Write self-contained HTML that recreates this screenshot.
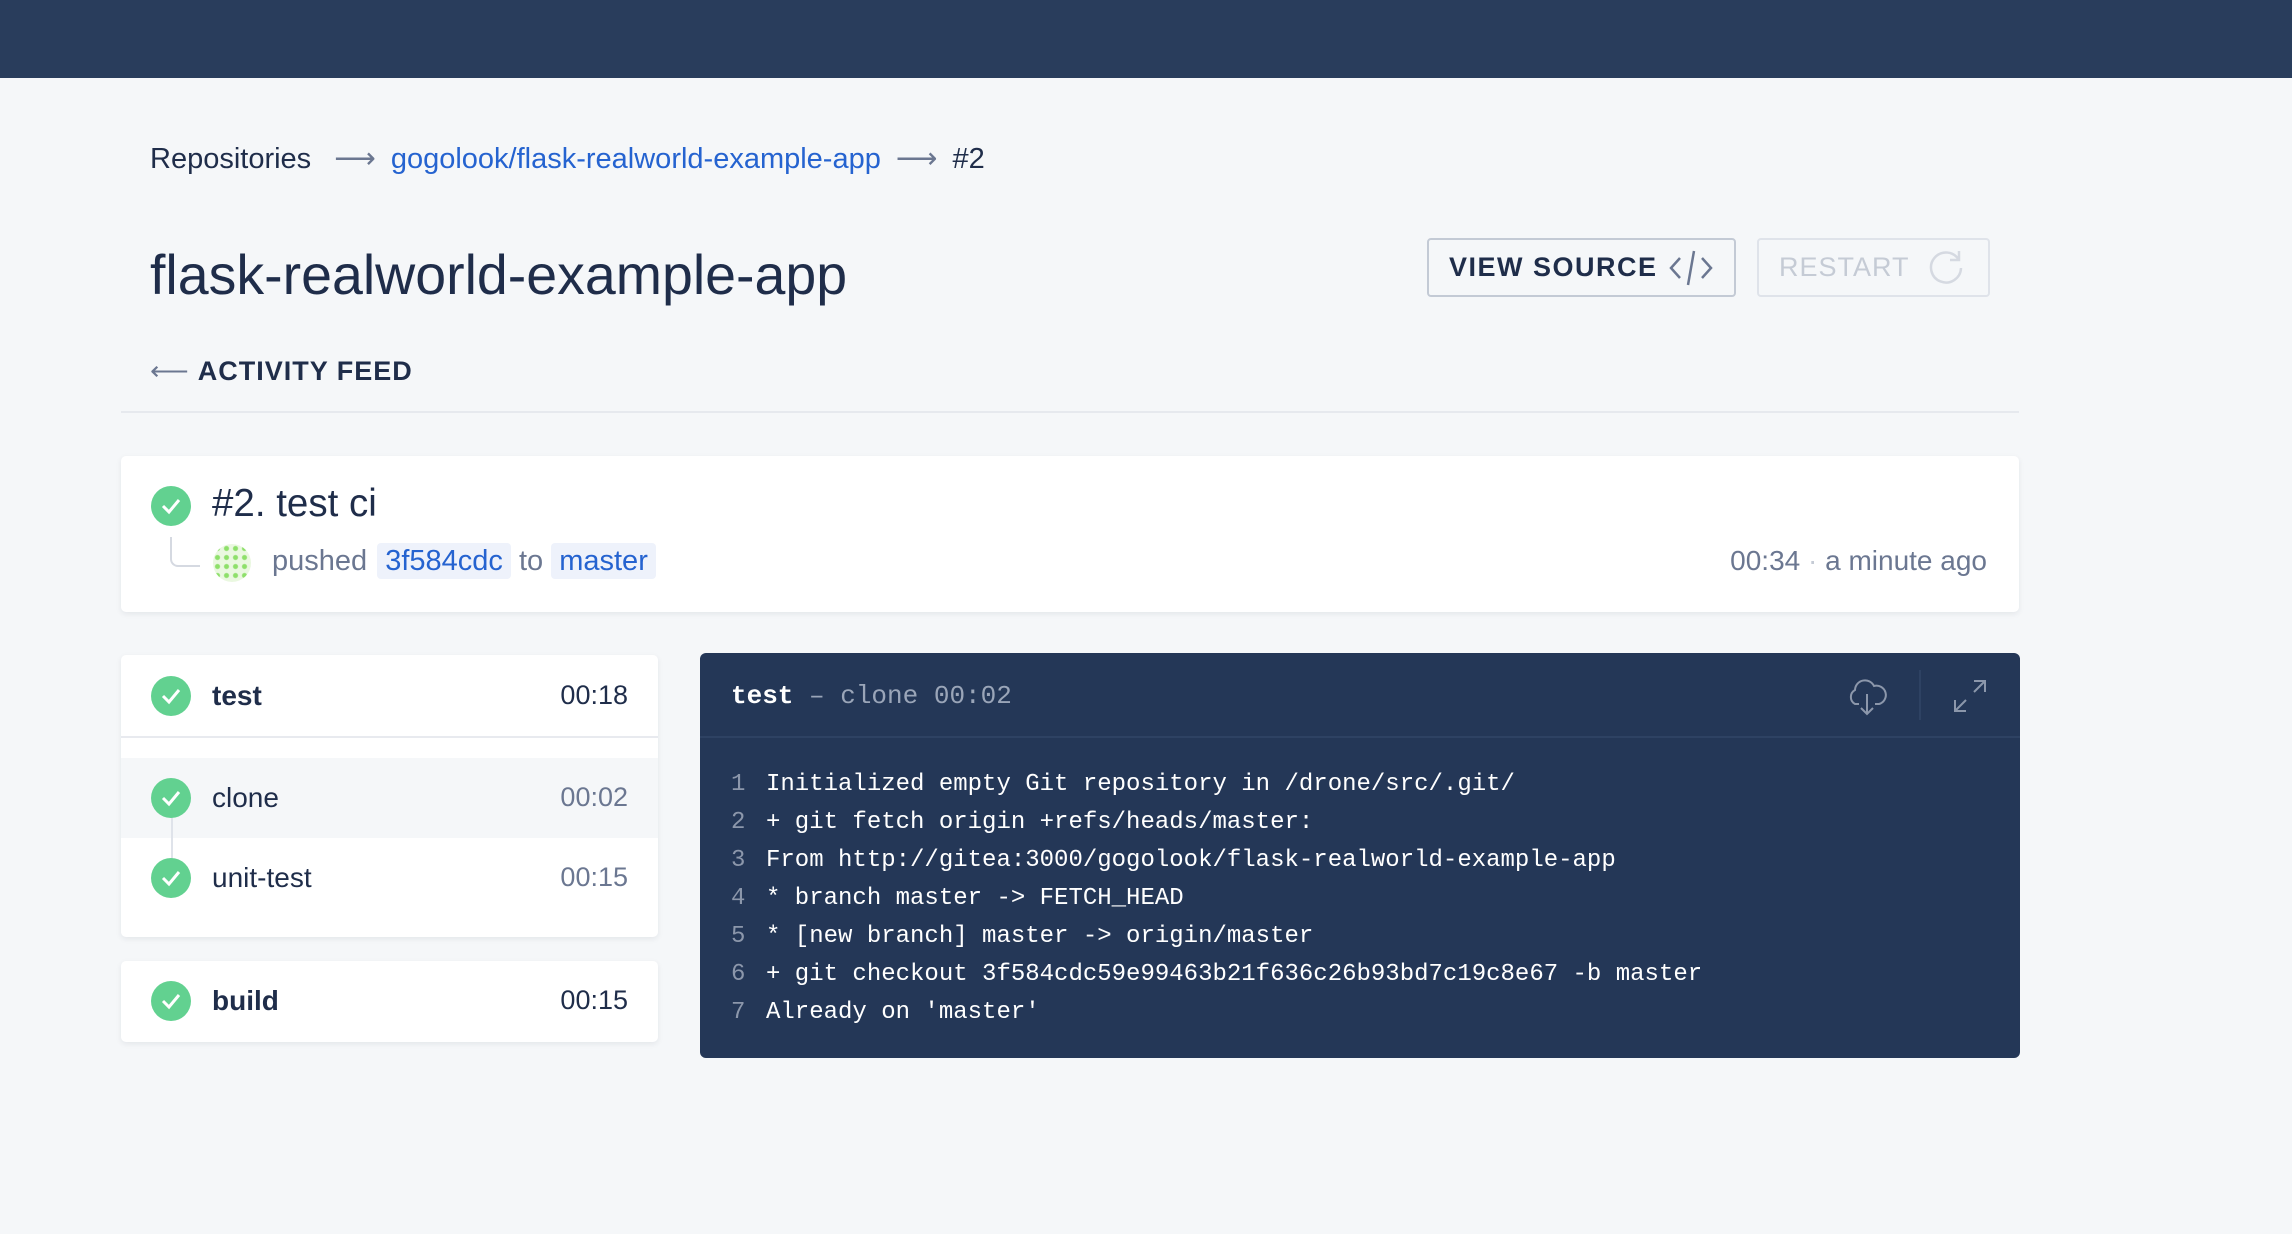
<!DOCTYPE html>
<html><head><meta charset="utf-8"><style>
*{box-sizing:border-box;margin:0;padding:0}
body{width:2292px;height:1234px;background:#f5f7f9;font-family:"Liberation Sans",sans-serif;color:#1f2d4a;position:relative;overflow:hidden}
.a{position:absolute}
.top{left:0;top:0;width:2292px;height:78px;background:#293d5c}
.chk{width:40px;height:40px;border-radius:50%;background:#62d190;display:flex;align-items:center;justify-content:center}
.card{background:#fff;border-radius:5px;box-shadow:0 2px 6px rgba(30,40,70,.08)}
.mono{font-family:"Liberation Mono",monospace}
.tag{background:#eef2fb;color:#2563d0;border-radius:4px;padding:2px 8px}
.n{display:inline-block;width:35px;color:#8c97ab}
</style></head><body>
<div class="a top"></div>

<div class="a" style="left:150px;top:141px;font-size:29px;white-space:nowrap">Repositories <span style="color:#6b7791;margin:0 15px">&#10230;</span><span style="color:#2563d0">gogolook/flask-realworld-example-app</span><span style="color:#6b7791;margin:0 15px">&#10230;</span>#2</div>

<div class="a" style="left:150px;top:243px;font-size:55.5px;color:#1f2d4a">flask-realworld-example-app</div>

<div class="a" style="left:1427px;top:238px;width:309px;height:59px;border:2px solid #c3cad5;border-radius:4px;display:flex;align-items:center;padding-left:20px;font-size:27px;font-weight:bold;letter-spacing:1.5px;color:#1f2d4a">VIEW SOURCE
<svg width="46" height="40" viewBox="0 0 46 40" style="margin-left:10px"><path d="M12 10 L3 20 L12 30 M34 10 L43 20 L34 30 M26 3 L20 37" stroke="#6b7791" stroke-width="2.5" fill="none"/></svg></div>
<div class="a" style="left:1757px;top:238px;width:233px;height:59px;border:2px solid #dfe3ea;border-radius:4px;display:flex;align-items:center;padding-left:20px;font-size:27px;letter-spacing:1px;color:#c5cbd5">RESTART
<svg width="40" height="40" viewBox="0 0 40 40" style="margin-left:16px"><path d="M33 12 A15 15 0 1 0 35 20 M33 3 L33 12 L24 12" stroke="#d5d9e1" stroke-width="2.5" fill="none"/></svg></div>

<div class="a" style="left:150px;top:356px;font-size:27px;font-weight:bold;letter-spacing:1px;white-space:nowrap"><span style="font-weight:normal;color:#6b7791;margin-right:8px">&#10229;</span>ACTIVITY FEED</div>
<div class="a" style="left:121px;top:411px;width:1898px;height:2px;background:#e6e9ee"></div>

<div class="a card" style="left:121px;top:456px;width:1898px;height:156px"></div>
<div class="a chk" style="left:151px;top:486px"><svg width="22" height="18"><path d="M3 9 L9 15 L19 3" stroke="#fff" stroke-width="3" fill="none"/></svg></div>
<div class="a" style="left:212px;top:482px;font-size:38.5px">#2. test ci</div>
<div class="a" style="left:170px;top:537px;width:30px;height:30px;border-left:2px solid #d5d9e1;border-bottom:2px solid #d5d9e1;border-bottom-left-radius:8px"></div>
<div class="a" style="left:213px;top:544px;width:38px;height:38px;border-radius:50%;background:radial-gradient(circle,#8ee06a 2px,transparent 3px) 0 0/9px 9px,#eaf8e0"></div>
<div class="a" style="left:272px;top:545px;font-size:29px;color:#6b7791;white-space:nowrap">pushed <span class="tag" style="margin-left:2px">3f584cdc</span> to <span class="tag">master</span></div>
<div class="a" style="left:1500px;top:545px;width:487px;text-align:right;font-size:28px;color:#6b7791">00:34 <span style="color:#c5cbd5">·</span> a minute ago</div>

<div class="a card" style="left:121px;top:655px;width:537px;height:282px"></div>
<div class="a" style="left:121px;top:736px;width:537px;height:2px;background:#e8eaef"></div>
<div class="a" style="left:121px;top:758px;width:537px;height:80px;background:#f5f7f9"></div>
<div class="a" style="left:171px;top:800px;width:2px;height:70px;background:#dfe3ea"></div>
<div class="a card" style="left:121px;top:961px;width:537px;height:81px"></div>

<div class="a chk" style="left:151px;top:676px"><svg width="22" height="18"><path d="M3 9 L9 15 L19 3" stroke="#fff" stroke-width="3" fill="none"/></svg></div>
<div class="a" style="left:212px;top:680px;font-size:28px;font-weight:bold">test</div>
<div class="a" style="left:500px;top:680px;width:128px;text-align:right;font-size:27px">00:18</div>

<div class="a chk" style="left:151px;top:778px"><svg width="22" height="18"><path d="M3 9 L9 15 L19 3" stroke="#fff" stroke-width="3" fill="none"/></svg></div>
<div class="a" style="left:212px;top:782px;font-size:28px">clone</div>
<div class="a" style="left:500px;top:782px;width:128px;text-align:right;font-size:27px;color:#6b7791">00:02</div>

<div class="a chk" style="left:151px;top:858px"><svg width="22" height="18"><path d="M3 9 L9 15 L19 3" stroke="#fff" stroke-width="3" fill="none"/></svg></div>
<div class="a" style="left:212px;top:862px;font-size:28px">unit-test</div>
<div class="a" style="left:500px;top:862px;width:128px;text-align:right;font-size:27px;color:#6b7791">00:15</div>

<div class="a chk" style="left:151px;top:981px"><svg width="22" height="18"><path d="M3 9 L9 15 L19 3" stroke="#fff" stroke-width="3" fill="none"/></svg></div>
<div class="a" style="left:212px;top:985px;font-size:28px;font-weight:bold">build</div>
<div class="a" style="left:500px;top:985px;width:128px;text-align:right;font-size:27px">00:15</div>

<div class="a" style="left:700px;top:653px;width:1320px;height:405px;background:#243757;border-radius:6px"></div>
<div class="a" style="left:700px;top:736px;width:1320px;height:2px;background:#2e4263"></div>
<div class="a mono" style="left:731px;top:681px;font-size:26px;color:#9aa5b8;white-space:nowrap"><b style="color:#fff">test</b> – clone 00:02</div>
<svg class="a" style="left:1845px;top:674px" width="44" height="44" viewBox="0 0 44 44"><path d="M14 30 H10 A8 8 0 0 1 10 16 A10 10 0 0 1 29 12 A8 8 0 0 1 34 30 H30 M22 20 V40 M16 34 L22 40 L28 34" stroke="#8c97ab" stroke-width="2" fill="none"/></svg>
<div class="a" style="left:1919px;top:670px;width:2px;height:50px;background:#2e4263"></div>
<svg class="a" style="left:1952px;top:678px" width="36" height="36" viewBox="0 0 36 36"><path d="M22 3 H33 V14 M33 3 L22 14 M3 22 V33 H14 M3 33 L14 22" stroke="#8c97ab" stroke-width="2" fill="none"/></svg>

<div class="a mono" style="left:731px;top:766px;font-size:24px;line-height:38px;color:#fff;white-space:pre"><span class="n">1</span>Initialized empty Git repository in /drone/src/.git/
<span class="n">2</span>+ git fetch origin +refs/heads/master:
<span class="n">3</span>From http://gitea:3000/gogolook/flask-realworld-example-app
<span class="n">4</span>* branch master -&gt; FETCH_HEAD
<span class="n">5</span>* [new branch] master -&gt; origin/master
<span class="n">6</span>+ git checkout 3f584cdc59e99463b21f636c26b93bd7c19c8e67 -b master
<span class="n">7</span>Already on 'master'</div>
</body></html>
